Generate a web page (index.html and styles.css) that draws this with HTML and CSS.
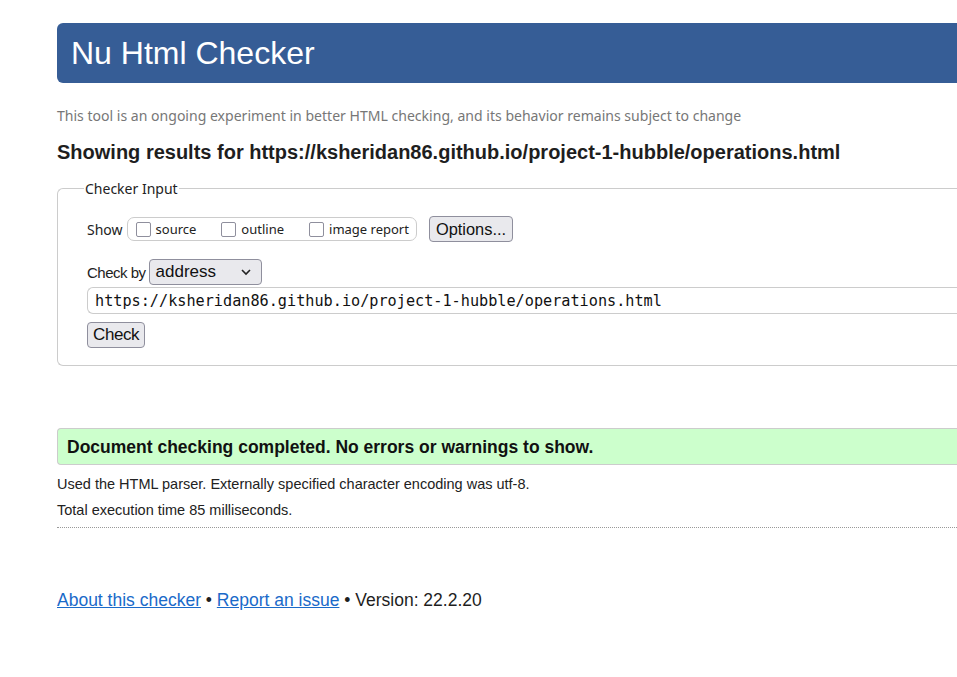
FILE: index.html
```html
<!DOCTYPE html>
<html lang="en">
<head>
<meta charset="utf-8">
<title>Showing results for https://ksheridan86.github.io/project-1-hubble/operations.html - Nu Html Checker</title>
<link rel="stylesheet" href="styles.css">
</head>
<body>
<div class="page">
  <h1 class="banner">Nu Html Checker</h1>
  <p class="tagline">This tool is an ongoing experiment in better HTML checking, and its behavior remains subject to change</p>
  <h2 class="results-title">Showing results for https://ksheridan86.github.io/project-1-hubble/operations.html</h2>
  <fieldset class="checker">
    <legend class="legend">Checker Input</legend>
    <div class="show-row">
      <span class="show-label">Show</span>
      <span class="pill">
        <label class="opt"><span class="box"></span>source</label>
        <label class="opt"><span class="box"></span>outline</label>
        <label class="opt"><span class="box"></span>image report</label>
      </span>
      <button class="btn btn-options" type="button">Options...</button>
    </div>
    <div class="checkby-row">
      <span class="checkby-label">Check by</span>
      <span class="select">address<svg class="chev" width="12" height="8" viewBox="0 0 12 8"><path d="M2 2 L6 6 L10 2" fill="none" stroke="#222" stroke-width="1.6"/></svg></span>
    </div>
    <div class="url">https://ksheridan86.github.io/project-1-hubble/operations.html</div>
    <button class="btn btn-check" type="button">Check</button>
  </fieldset>
  <p class="success">Document checking completed. No errors or warnings to show.</p>
  <p class="details">Used the HTML parser. Externally specified character encoding was utf-8.</p>
  <p class="details details-last">Total execution time 85 milliseconds.</p>
  <p class="footer"><a href="#">About this checker</a> • <a href="#">Report an issue</a> • Version: 22.2.20</p>
</div>
</body>
</html>
```
FILE: styles.css
```css
html, body {
  margin: 0;
  padding: 0;
  overflow: hidden;
  background: #fff;
}
body {
  font-family: "Liberation Sans", Arial, sans-serif;
  color: #1a1a1a;
}
.page {
  margin-left: 57px;
  padding-top: 23px;
  width: 1100px;
}
.banner {
  margin: 0;
  height: 60px;
  box-sizing: border-box;
  padding: 12px 0 0 14px;
  background: #365d96;
  color: #fff;
  font-weight: normal;
  font-size: 32px;
  line-height: 36px;
  border-radius: 6px 0 0 6px;
}
.tagline {
  margin: 23px 0 0;
  font-family: "Noto Sans", "Open Sans", sans-serif;
  font-size: 14.05px;
  line-height: 20px;
  color: #777;
}
.results-title {
  margin: 14px 0 0;
  font-size: 20px;
  line-height: 24px;
  color: #1e1e1e;
}
.checker {
  margin: 15px 0 0;
  padding: 18px 0 17px 29px;
  border: 1px solid #ccc;
  border-right: none;
  border-radius: 6px 0 0 6px;
  font-family: "Noto Sans", "Open Sans", sans-serif;
  font-size: 14px;
}
.legend {
  padding: 0 1px;
  margin-left: -3px;
  font-size: 14px;
  color: #222;
}
.show-row {
  display: flex;
  align-items: center;
  height: 26px;
}
.show-label {
  margin-right: 4px;
  color: #222;
}
.pill {
  display: flex;
  align-items: center;
  height: 22px;
  border: 1px solid #ccc;
  border-radius: 7px;
  padding: 0 7px 0 8px;
  font-size: 13px;
  color: #222;
}
.opt {
  display: flex;
  align-items: center;
  margin-right: 25px;
}
.opt:last-child {
  margin-right: 0;
}
.box {
  width: 13px;
  height: 13px;
  border: 1px solid #8f8f9d;
  border-radius: 2px;
  margin-right: 5px;
  box-sizing: content-box;
}
.btn {
  font-family: "Noto Sans", "Open Sans", sans-serif;
  background: #e9e9ed;
  border: 1px solid #8f8f9d;
  border-radius: 4px;
  color: #111;
  padding: 0 6px;
  font-size: 16px;
  height: 26px;
}
.btn-options {
  margin-left: 12px;
  font-family: "Liberation Sans", Arial, sans-serif;
  font-size: 16.4px;
  padding: 0 6px;
}
.checkby-row {
  display: flex;
  align-items: center;
  margin-top: 17px;
}
.checkby-label {
  font-family: "Liberation Sans Narrow", "Liberation Sans", sans-serif;
  font-size: 15px;
  letter-spacing: -0.5px;
  margin-right: 3px;
  color: #222;
}
.select {
  display: flex;
  align-items: center;
  justify-content: space-between;
  box-sizing: border-box;
  width: 113px;
  height: 26px;
  padding: 0 9px 0 6px;
  background: #e9e9ed;
  border: 1px solid #8f8f9d;
  border-radius: 4px;
  font-family: "Liberation Sans", Arial, sans-serif;
  font-size: 17px;
  color: #111;
}
.url {
  margin-top: 2px;
  height: 27px;
  box-sizing: border-box;
  border: 1px solid #ccc;
  border-right: none;
  border-radius: 6px 0 0 6px;
  padding: 3px 0 0 7px;
  font-family: "DejaVu Sans Mono", "Liberation Mono", monospace;
  font-size: 15.2px;
  line-height: 20px;
  color: #111;
}
.btn-check {
  margin-top: 8px;
  font-family: "Liberation Sans Narrow", "Liberation Sans", sans-serif;
  font-size: 17px;
  letter-spacing: -0.4px;
  padding: 0 5px;
}
.success {
  margin: 62px 0 0;
  height: 37px;
  box-sizing: border-box;
  padding: 8px 0 0 9px;
  background: #ccffcc;
  border: 1px solid #ccc;
  border-right: none;
  border-radius: 4px 0 0 4px;
  font-weight: bold;
  font-size: 17.5px;
  line-height: 20px;
  color: #111;
}
.details {
  margin: 10px 0 0;
  font-size: 14.5px;
  line-height: 18px;
  color: #222;
}
.details + .details {
  margin-top: 8px;
}
.details-last {
  padding-bottom: 8px;
  border-bottom: 1px dotted #999;
}
.footer {
  margin: 61px 0 0;
  font-size: 17.5px;
  line-height: 22px;
  color: #1e1e1e;
}
.footer a {
  color: #1a6ac9;
  text-decoration: underline;
}
```
